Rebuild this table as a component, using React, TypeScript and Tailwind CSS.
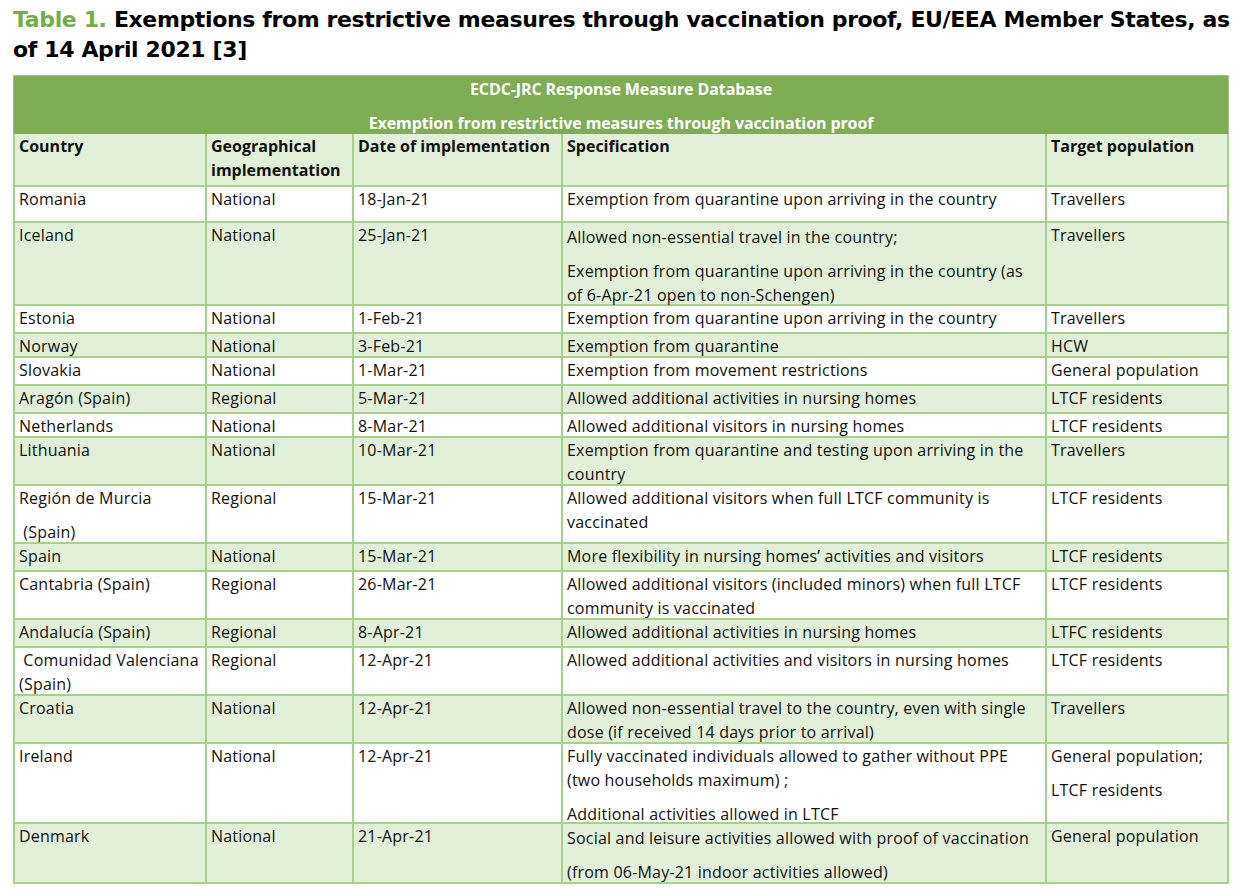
import React from "react";

const B = "border-[#a8d08d]";

type Cell = React.ReactNode;
type Row = { h: number; green: boolean; cells: Cell[] };

const P = ({ children, gap = 10 }: { children: React.ReactNode; gap?: number }) => (
  <div style={{ marginTop: gap }}>{children}</div>
);

const rows: Row[] = [
  { h: 36, green: false, cells: ["Romania", "National", "18-Jan-21", "Exemption from quarantine upon arriving in the country", "Travellers"] },
  {
    h: 83,
    green: true,
    cells: [
      "Iceland",
      "National",
      "25-Jan-21",
      <div className="pt-[2px]">
        <div>Allowed non-essential travel in the country;</div>
        <P>
          Exemption from quarantine upon arriving in the country (as
          <br />
          of 6-Apr-21 open to non-Schengen)
        </P>
      </div>,
      "Travellers",
    ],
  },
  { h: 28, green: false, cells: ["Estonia", "National", "1-Feb-21", "Exemption from quarantine upon arriving in the country", "Travellers"] },
  { h: 24, green: true, cells: ["Norway", "National", "3-Feb-21", "Exemption from quarantine", "HCW"] },
  { h: 28, green: false, cells: ["Slovakia", "National", "1-Mar-21", "Exemption from movement restrictions", "General population"] },
  { h: 28, green: true, cells: ["Aragón (Spain)", "Regional", "5-Mar-21", "Allowed additional activities in nursing homes", "LTCF residents"] },
  { h: 24, green: false, cells: ["Netherlands", "National", "8-Mar-21", "Allowed additional visitors in nursing homes", "LTCF residents"] },
  {
    h: 48,
    green: true,
    cells: [
      "Lithuania",
      "National",
      "10-Mar-21",
      <>
        Exemption from quarantine and testing upon arriving in the
        <br />
        country
      </>,
      "Travellers",
    ],
  },
  {
    h: 58,
    green: false,
    cells: [
      <div>
        <div>Región de Murcia</div>
        <P>
          <span className="whitespace-pre"> (Spain)</span>
        </P>
      </div>,
      "Regional",
      "15-Mar-21",
      <>
        Allowed additional visitors when full LTCF community is
        <br />
        vaccinated
      </>,
      "LTCF residents",
    ],
  },
  { h: 28, green: true, cells: ["Spain", "National", "15-Mar-21", "More flexibility in nursing homes’ activities and visitors", "LTCF residents"] },
  {
    h: 48,
    green: false,
    cells: [
      "Cantabria (Spain)",
      "Regional",
      "26-Mar-21",
      <>
        Allowed additional visitors (included minors) when full LTCF
        <br />
        community is vaccinated
      </>,
      "LTCF residents",
    ],
  },
  { h: 28, green: true, cells: ["Andalucía (Spain)", "Regional", "8-Apr-21", "Allowed additional activities in nursing homes", "LTFC residents"] },
  {
    h: 48,
    green: false,
    cells: [
      <>
        <span className="whitespace-pre"> Comunidad Valenciana</span>
        <br />
        (Spain)
      </>,
      "Regional",
      "12-Apr-21",
      "Allowed additional activities and visitors in nursing homes",
      "LTCF residents",
    ],
  },
  {
    h: 48,
    green: true,
    cells: [
      "Croatia",
      "National",
      "12-Apr-21",
      <>
        Allowed non-essential travel to the country, even with single
        <br />
        dose (if received 14 days prior to arrival)
      </>,
      "Travellers",
    ],
  },
  {
    h: 80,
    green: false,
    cells: [
      "Ireland",
      "National",
      "12-Apr-21",
      <div>
        <div>
          Fully vaccinated individuals allowed to gather without PPE
          <br />
          (two households maximum) ;
        </div>
        <P gap={10}>Additional activities allowed in LTCF</P>
      </div>,
      <div>
        <div>General population;</div>
        <P>LTCF residents</P>
      </div>,
    ],
  },
  {
    h: 60,
    green: true,
    cells: [
      "Denmark",
      "National",
      "21-Apr-21",
      <div className="pt-[2px]">
        <div>Social and leisure activities allowed with proof of vaccination</div>
        <P>(from 06-May-21 indoor activities allowed)</P>
      </div>,
      "General population",
    ],
  },
];

const widths = ["w-[194px]", "w-[147px]", "w-[209px]", "w-[484px]", "w-[182px]"];

function TableRow({ row, bold = false }: { row: Row; bold?: boolean }) {
  return (
    <div className={`flex ${row.green ? "bg-[#e2efd9]" : "bg-white"}`} style={{ height: row.h }}>
      {row.cells.map((c, i) => (
        <div
          key={i}
          className={`${widths[i]} shrink-0 border-b-2 border-r-2 ${B} ${i === 0 ? "border-l-2" : ""} pl-[4px] pr-[2px] whitespace-nowrap ${bold ? "font-bold" : "tracking-[0.2px]"}`}
        >
          {c}
        </div>
      ))}
    </div>
  );
}

export default function App() {
  return (
    <div
      className="w-[1244px] h-[896px] bg-white overflow-hidden pl-[13px] pt-[5px] text-black"
      style={{ fontFamily: "'Open Sans', 'Noto Sans', sans-serif" }}
    >
      <div
        className="text-[22px] leading-[30px] font-bold whitespace-nowrap tracking-[-0.37px]"
        style={{ fontFamily: "'DejaVu Sans', Verdana, sans-serif" }}
      >
        <span className="text-[#72ae48]">Table 1.</span> Exemptions from restrictive measures through vaccination proof, EU/EEA Member States, as
        <br />
        of 14 April 2021 [3]
      </div>
      <div className="mt-[10px] w-[1216px] text-[16px] leading-[24px] text-[#111]">
        <div className="h-[59px] bg-[#7ead55] border border-b-0 border-[#a9bc98] text-white font-bold text-center text-[16px] pt-[1px] tracking-[-0.1px]">
          <div>ECDC-JRC Response Measure Database</div>
          <div className="mt-[10px]">Exemption from restrictive measures through vaccination proof</div>
        </div>
        <TableRow
          bold
          row={{
            h: 53,
            green: true,
            cells: [
              "Country",
              <>
                Geographical
                <br />
                implementation
              </>,
              "Date of implementation",
              "Specification",
              "Target population",
            ],
          }}
        />
        {rows.map((r, i) => (
          <TableRow key={i} row={r} />
        ))}
      </div>
    </div>
  );
}
